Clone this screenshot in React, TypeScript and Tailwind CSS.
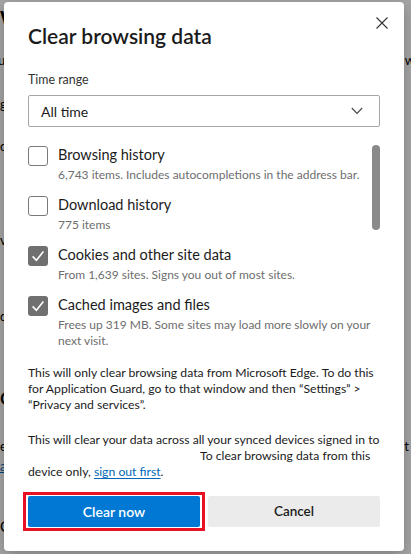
import { ReactNode } from "react";

const Checkbox = ({ checked }: { checked?: boolean }) =>
  checked ? (
    <span className="mt-[1px] flex h-5 w-5 shrink-0 items-center justify-center rounded-[3px] bg-[#707070]">
      <svg width="20" height="20" viewBox="0 0 20 20">
        <path d="M4.6 10.4 8.4 14.2 15.4 5.6" fill="none" stroke="#fff" strokeWidth="1.6" />
      </svg>
    </span>
  ) : (
    <span className="mt-[1px] h-5 w-5 shrink-0 rounded-[3px] border border-[#7a7a7a] bg-white" />
  );

const Item = ({ label, checked, children }: { label: string; checked?: boolean; children: ReactNode }) => (
  <div className="flex gap-[10px]">
    <Checkbox checked={checked} />
    <div>
      <div className="text-[14.5px] leading-5 text-[#1b1b1b]">{label}</div>
      <div className="mt-[2px] text-[12px] leading-4 text-[#6e6e6e]">{children}</div>
    </div>
  </div>
);

// the settings page behind the dialog, only its edges show
const Page = () => (
  <div className="flex flex-col text-[13px] leading-4 text-black">
    <div className="mt-[6px] text-[20px] font-bold leading-6">W</div>
    <div className="mt-[22px] flex justify-between">
      <span className="-ml-[2px]">ui</span>
      <span className="mr-[-4px]">w</span>
    </div>
    <div className="mt-[28px]">g</div>
    <div className="mt-[26px]">c</div>
    <div className="mt-[78px]">v</div>
    <div className="mt-[60px]">d</div>
    <div className="mt-[62px] text-[18px] font-semibold leading-6">C</div>
    <div className="mt-[28px] flex justify-between">
      <span>e</span>
      <span className="mr-[2px]">t</span>
    </div>
    <div className="mt-[4px] text-[#0067b8] underline">a</div>
    <div className="mt-[44px] text-[15px]">C</div>
  </div>
);

export default function App() {
  return (
    <div className="relative h-[554px] w-[411px] overflow-hidden bg-white font-['Lato',sans-serif]">
      <Page />
      <div className="absolute inset-0 bg-black/35" />

      <div className="absolute left-[4px] top-[2px] flex h-[549px] w-[400px] flex-col rounded-[4px] bg-white px-6 shadow-[0_4px_16px_rgba(0,0,0,0.25)]">
        <button className="absolute right-[14px] top-[13px] p-[2px]">
          <svg width="12" height="12" viewBox="0 0 12 12">
            <path d="M0.5 0.5 11.5 11.5M11.5 0.5 0.5 11.5" stroke="#333" strokeWidth="1.1" />
          </svg>
        </button>

        <h1 className="mt-[20px] text-[21px] font-semibold leading-7 text-[#1b1b1b]">Clear browsing data</h1>

        <label className="mt-[21px] text-[12.4px] leading-[18px] text-[#333]">Time range</label>
        <div className="mt-[6px] flex h-[32px] items-center justify-between rounded-[2px] border border-[#a6a6a6] pl-3 pr-4">
          <span className="text-[14px] text-[#1b1b1b]">All time</span>
          <svg width="12" height="8" viewBox="0 0 12 8">
            <path d="M0.8 1 6 6.5 11.2 1" fill="none" stroke="#444" strokeWidth="1.1" />
          </svg>
        </div>

        <div className="mt-[18px] flex">
          <div className="flex min-w-0 flex-1 flex-col gap-[12px] whitespace-nowrap">
            <Item label="Browsing history">6,743 items. Includes autocompletions in the address bar.</Item>
            <Item label="Download history">775 items</Item>
            <Item label="Cookies and other site data" checked>
              From 1,639 sites. Signs you out of most sites.
            </Item>
            <Item label="Cached images and files" checked>
              Frees up 319 MB. Some sites may load more slowly on your
              <br />
              next visit.
            </Item>
          </div>
          <div className="w-2 shrink-0">
            <div className="h-[85px] rounded-full bg-[#8a8a8a]" />
          </div>
        </div>

        <p className="mt-4 whitespace-nowrap text-[12.2px] leading-4 text-[#1b1b1b]">
          This will only clear browsing data from Microsoft Edge. To do this
          <br />
          for Application Guard, go to that window and then “Settings” &gt;
          <br />
          “Privacy and services”.
        </p>

        <p className="mt-[19px] whitespace-nowrap text-[12.2px] leading-4 text-[#1b1b1b]">
          This will clear your data across all your synced devices signed in to
          <br />
          <span className="inline-block w-[172px]" />
          To clear browsing data from this
          <br />
          device only,{" "}
          <a href="#" className="text-[#0067b8] underline underline-offset-2">
            sign out first
          </a>
          .
        </p>

        <div className="mt-[16px] flex gap-2">
          <div className="relative flex-1">
            <button className="h-[31px] w-full rounded-[2px] bg-[#0078d4] text-[14px] font-semibold text-white">
              Clear now
            </button>
            <div className="pointer-events-none absolute -inset-x-[5px] -top-[4px] -bottom-[4px] border-[3px] border-[#e81123]" />
          </div>
          <button className="h-[31px] flex-1 rounded-[2px] bg-[#ebebeb] text-[13.5px] font-semibold text-[#1b1b1b]">
            Cancel
          </button>
        </div>
      </div>
    </div>
  );
}
